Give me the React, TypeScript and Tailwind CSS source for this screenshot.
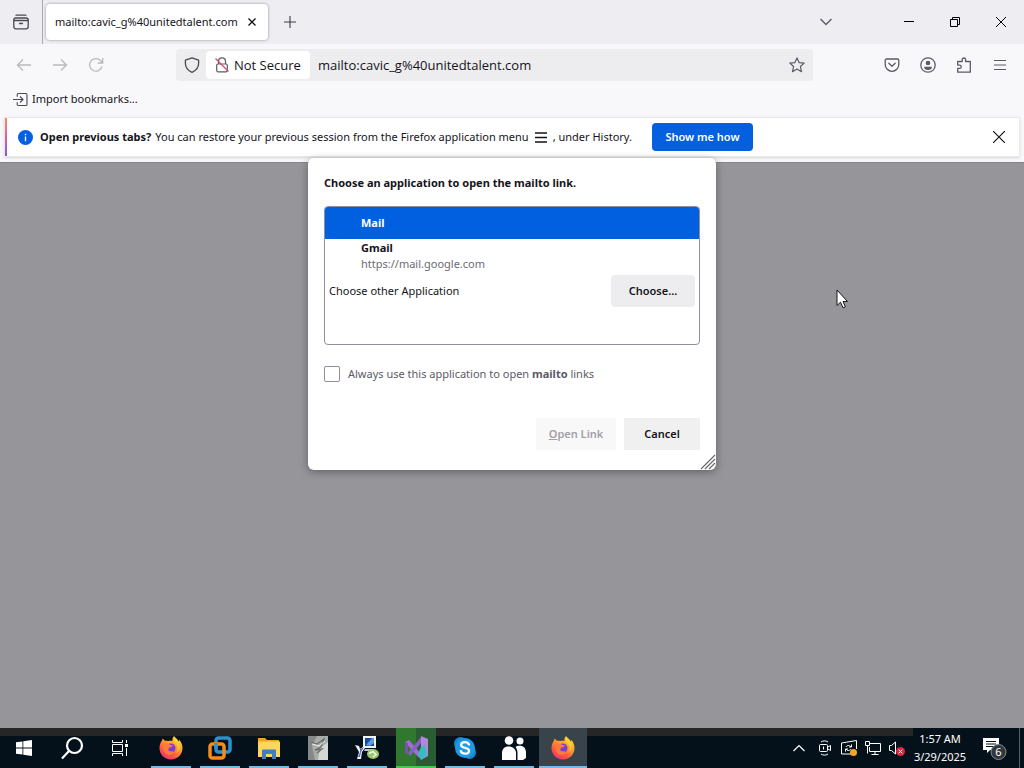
import React, { useState } from 'react';

const FirefoxLogo = () => (
  <svg className="w-6 h-6" viewBox="0 0 24 24">
    <defs>
      <linearGradient id="ffBody" x1="0.8" y1="0" x2="0.2" y2="1">
        <stop offset="0" stopColor="#ffe226" />
        <stop offset="0.4" stopColor="#ff9a2e" />
        <stop offset="0.75" stopColor="#ff4f45" />
        <stop offset="1" stopColor="#e6308a" />
      </linearGradient>
    </defs>
    <path d="M15 0c1 1.500 4 3 4.500 5.500.5-.4.600-1.200.500-1.800C22.500 6 23.500 9 23.500 12c0 6.500-5 11.500-11.500 11.500S.5 18.500.5 12c0-3 1-5.500 2.500-7.500l.6-2L6 4.800c1-.2 2-.1 3 .3C11 4.500 12.500 4.500 13.500 5 13 3 14 1 15 0z" fill="url(#ffBody)" />
    <circle cx="12" cy="12" r="4.500" fill="#7a3fd2" />
    <path d="M4 9c2-1.500 5-1.500 7-.5 1.200.7 2 1 3 1-.5 1.500-2 1.500-3.500 2-.8.3-.5 1.500-1.500 2 .8 1.800 3 2.500 5 1.500 1 1.500-1 4-3.500 4C6.500 19 3 14 4 9z" fill="#ff7a3c" />
    <path d="M15 6c4 2.500 5 7 2.500 11 3.500-2 4-7.500 2-11L15 1z" fill="#ffd53b" opacity="0.7" />
  </svg>
);

const WindowsLogo = () => (
  <svg className="w-4 h-4" viewBox="0 0 16 16" fill="#fff">
    <path d="M0 2.300L6.500 1.400V7.600H0zM7.300 1.300L16 0v7.600H7.300zM0 8.400h6.500v6.200L0 13.700zM7.300 8.400H16V16l-8.700-1.300z" />
  </svg>
);

const SearchIcon = () => (
  <svg className="w-6 h-6" viewBox="0 0 24 24" fill="none" stroke="#fff" strokeWidth="2.200">
    <circle cx="14.500" cy="9.500" r="7.500" />
    <path d="M9 15L2 22.500" />
  </svg>
);

const TaskViewIcon = () => (
  <svg className="w-4 h-4" viewBox="0 0 16 16" fill="none" stroke="#fff" strokeWidth="1">
    <path d="M.5 0v2.500h10V0M.5 16v-2.500h10V16M.5 4.500h10v7H.5zM14.500 0v3M14.500 8v8" />
    <path d="M13 4h3v3h-3z" fill="#fff" stroke="none" />
  </svg>
);

const VmwareIcon = () => (
  <svg className="w-6 h-6" viewBox="0 0 24 24" fill="none" strokeWidth="3.500">
    <rect x="8" y="2" width="14" height="14" rx="2.500" stroke="#2a93cf" />
    <rect x="2" y="8" width="14" height="14" rx="2.500" stroke="#f28c1c" />
    <path d="M8 12V7" stroke="#2a93cf" />
  </svg>
);

const ExplorerIcon = () => (
  <svg className="w-6 h-6" viewBox="0 0 24 24">
    <path d="M1 2h7l2 2h12v4H1z" fill="#e9a820" />
    <path d="M1 5.500h22V21H1z" fill="#fbd75e" />
    <path d="M5 23v-8.500a1 1 0 011-1h12a1 1 0 011 1V23h-4v-5H9v5z" fill="#3b80c3" />
  </svg>
);

const ServerIcon = () => (
  <svg className="w-6 h-6" viewBox="0 0 24 24">
    <path d="M2 0h20v24H2z" fill="#a9adaa" />
    <path d="M2 0h9L6 10l3 14H2z" fill="#858a87" />
    <path d="M14 12l8-6v18H12z" fill="#d5d8d5" />
    <path d="M5 6l6 2 7-5-3 8-6 3 7-1-5 4" fill="none" stroke="#6a706d" strokeWidth="1.300" />
    <path d="M6 8l7 2 6-5" fill="none" stroke="#eef0ee" />
  </svg>
);

const RemoteIcon = () => (
  <svg className="w-6 h-6" viewBox="0 0 24 24">
    <path d="M8 0h13v12H8z" fill="#f1f5f8" />
    <path d="M10 2h9v8h-9z" fill="#174a9c" />
    <path d="M11 9l6-7h2v5l-4 3z" fill="#5d9be0" />
    <path d="M10 13h9l1 2H9z" fill="#b9c5cf" />
    <path d="M0 9l4 1 1 3 4-3 1 2-3 4-1 7H2l2-7z" fill="#f0f3fa" />
    <path d="M5 13l4-2-3 5-1 5H3l2-5z" fill="#5a6fb5" />
    <ellipse cx="18" cy="18" rx="6" ry="5" fill="#9cc66c" />
    <path d="M14 17.500l4-2 3 3-3 2.500" fill="none" stroke="#eef7e2" strokeWidth="1.500" />
  </svg>
);

const VisualStudioIcon = () => (
  <svg className="w-6 h-6" viewBox="0 0 24 24">
    <path d="M1 6l4-2 13 15-1 4-4-3z" fill="#a76bd6" />
    <path d="M1 6l3 1v10l-3 1z" fill="#7b52ad" />
    <path d="M4 17l13-16 2 4L6 20z" fill="#8661c5" />
    <path d="M17 0l7 3v17l-7 4z" fill="#b487dc" />
    <path d="M17 11l4-2 2 10-6 5-3-6z" fill="#35bdc2" />
  </svg>
);

const SkypeIcon = () => (
  <svg className="w-6 h-6" viewBox="0 0 24 24">
    <circle cx="7.500" cy="7.500" r="6.500" fill="#1688d2" />
    <circle cx="16.500" cy="16.500" r="6.500" fill="#1688d2" />
    <circle cx="12" cy="12" r="10" fill="#1c9be2" />
    <path d="M16 8.500c-.6-1.500-2-2.300-4-2.300-2.300 0-3.900 1-3.900 2.800 0 4 7.900 1.800 7.900 5.700 0 2-1.700 3-4 3-2.200 0-3.600-.9-4.200-2.500" fill="none" stroke="#fff" strokeWidth="2.300" strokeLinecap="round" />
  </svg>
);

const PeopleIcon = () => (
  <svg className="w-6 h-6" viewBox="0 0 24 24" fill="#fff">
    <circle cx="7" cy="4.500" r="4.300" />
    <circle cx="18" cy="5" r="3.500" />
    <path d="M0 24v-7c0-4 2.500-6.500 6.500-6.500S14 13 14 17v7z" />
    <path d="M13.500 11c1-.8 2.500-1.200 4-1.200 4 0 6.500 2.700 6.500 6.700V22l-3 2h-5.500v-7c0-2.500-.7-4.500-2-6z" />
  </svg>
);

const pinnedApps = [
  { name: 'Firefox', icon: <FirefoxLogo />, bar: 'bg-[#75b8ea]', bg: '' },
  { name: 'VMware', icon: <VmwareIcon />, bar: 'bg-[#75b8ea]', bg: '' },
  { name: 'File Explorer', icon: <ExplorerIcon />, bar: 'bg-[#75b8ea]', bg: '' },
  { name: 'Server Tools', icon: <ServerIcon />, bar: 'bg-[#75b8ea]', bg: '' },
  { name: 'Remote Desktop', icon: <RemoteIcon />, bar: 'bg-[#75b8ea]', bg: '' },
  { name: 'Visual Studio', icon: <VisualStudioIcon />, bar: 'bg-[#45c94c]', bg: 'bg-linear-to-r from-[#31782f] from-50% to-[#2a5c33] to-50%' },
  { name: 'Skype', icon: <SkypeIcon />, bar: 'bg-[#75b8ea]', bg: '' },
  { name: 'People', icon: <PeopleIcon />, bar: 'bg-[#75b8ea]', bg: '' },
];

const TabStrip = () => (
  <div className="flex h-11 bg-[#eeedf2]">
    <button aria-label="Recent browsing" className="flex w-[43px] items-center justify-center border-r border-[#a9a9b2]">
      <svg className="w-4 h-4" viewBox="0 0 16 16" fill="none" stroke="#4a4a55" strokeWidth="1.300" strokeLinecap="round">
        <path d="M3 1.200h10" />
        <rect x=".8" y="4" width="14.400" height="10.800" rx="2" />
        <path d="M1 6.500h14M6.500 9.500h3" />
      </svg>
    </button>
    <div className="my-1 ml-[3px] flex w-[222px] items-center rounded bg-white pl-[9px] shadow-[0_0_3px_rgba(0,0,0,0.4)]">
      <span className="grow whitespace-nowrap text-[11px]">mailto:cavic_g%40unitedtalent.com</span>
      <button aria-label="Close tab" className="mr-3">
        <svg className="w-2 h-2" viewBox="0 0 8 8" stroke="#15141a" strokeWidth="1.400">
          <path d="M.5.5l7 7M7.500.5l-7 7" />
        </svg>
      </button>
    </div>
    <button aria-label="New tab" className="ml-4">
      <svg className="w-3 h-3" viewBox="0 0 12 12" stroke="#3d3c48" strokeWidth="1.100">
        <path d="M6 0v12M0 6h12" />
      </svg>
    </button>
    <div className="grow" />
    <button aria-label="List all tabs" className="mr-9 flex w-12 items-center justify-center">
      <svg className="w-3 h-2" viewBox="0 0 12 8" fill="none" stroke="#5b5b66" strokeWidth="1.400">
        <path d="M.5 1L6 6.500 11.500 1" />
      </svg>
    </button>
    <div className="flex">
      <button aria-label="Minimize" className="flex w-[46px] items-center justify-center">
        <svg className="w-[10px] h-[10px]" viewBox="0 0 10 10" stroke="#000"><path d="M0 4.500h10" /></svg>
      </button>
      <button aria-label="Restore" className="flex w-[46px] items-center justify-center">
        <svg className="w-[10px] h-[10px]" viewBox="0 0 10 10" fill="none" stroke="#000">
          <path d="M.5 2.500h7v7h-7zM2.500 2.500v-2h7v7h-2" />
        </svg>
      </button>
      <button aria-label="Close" className="flex w-[46px] items-center justify-center">
        <svg className="w-[10px] h-[10px]" viewBox="0 0 10 10" stroke="#000"><path d="M0 0l10 10M10 0L0 10" /></svg>
      </button>
    </div>
  </div>
);

const NavBar = () => {
  const [url, setUrl] = useState('mailto:cavic_g%40unitedtalent.com');

  return (
    <div className="flex h-[41px] items-center bg-[#f8f8fa] pl-4">
      <div className="flex w-[160px] gap-5">
        <button aria-label="Back" disabled>
          <svg className="w-4 h-4" viewBox="0 0 16 16" fill="none" stroke="#b9b9bf" strokeWidth="1.300"><path d="M15 8H1.500M7 2.500L1.500 8 7 13.500" /></svg>
        </button>
        <button aria-label="Forward" disabled>
          <svg className="w-4 h-4" viewBox="0 0 16 16" fill="none" stroke="#b9b9bf" strokeWidth="1.300"><path d="M1 8h13.500M9 2.500L14.500 8 9 13.500" /></svg>
        </button>
        <button aria-label="Reload" disabled>
          <svg className="w-4 h-4" viewBox="0 0 16 16" fill="none" stroke="#b9b9bf" strokeWidth="1.300"><path d="M14 9.500A6.300 6.300 0 1112.500 3.500L14.500 5.500M14.700 1v5H9.800" /></svg>
        </button>
      </div>
      <div className="flex h-8 grow items-center rounded bg-[#ededef] font-['Open_Sans','Noto_Sans',sans-serif] text-[13px]">
        <svg className="ml-2 w-4 h-4" viewBox="0 0 16 16" fill="none" stroke="#4a4a55" strokeWidth="1.300">
          <path d="M8 .8l6.600 2.400v3.300c0 4-2.600 7-6.600 8.800C4 13.500 1.400 10.500 1.400 6.500V3.200z" strokeLinejoin="round" />
        </svg>
        <button className="ml-[6px] flex h-7 w-[104px] items-center gap-1 whitespace-nowrap rounded bg-white pl-2">
          <svg className="w-4 h-4 shrink-0" viewBox="0 0 16 16" fill="none" strokeWidth="1.200">
            <path d="M4.500 7V4.300a3.500 3.500 0 017 0V7" stroke="#5b5b66" />
            <rect x="2.700" y="7" width="10.600" height="7.800" rx="1.200" stroke="#5b5b66" />
            <path d="M1.500 1.500l13 13" stroke="#d0506c" />
          </svg>
          <span className="pt-0.5">Not Secure</span>
        </button>
        <input
          aria-label="Address"
          value={url}
          onChange={e => setUrl(e.target.value)}
          className="ml-2 min-w-0 grow bg-transparent pt-0.5 outline-none"
        />
        <button aria-label="Bookmark this page" className="mr-2">
          <svg className="w-4 h-4" viewBox="0 0 16 16" fill="none" stroke="#5b5b66" strokeWidth="1.200" strokeLinejoin="round">
            <path d="M8 .9l2.100 4.700 5.100.5-3.800 3.400 1.100 5.200L8 12.100l-4.500 2.600 1.100-5.200L.8 6.100l5.100-.5z" />
          </svg>
        </button>
      </div>
      <div className="ml-[71px] mr-4 flex gap-5 text-[#5b5b66]">
        <button aria-label="Save to Pocket">
          <svg className="w-4 h-4" viewBox="0 0 16 16" fill="none" stroke="currentColor" strokeWidth="1.300" strokeLinecap="round" strokeLinejoin="round">
            <path d="M2.500 2h11c.7 0 1.300.6 1.300 1.300V7.500A6.800 6.800 0 011.200 7.500V3.300C1.200 2.600 1.800 2 2.500 2z" />
            <path d="M4.800 6.200L8 9.200l3.200-3" />
          </svg>
        </button>
        <button aria-label="Account">
          <svg className="w-4 h-4" viewBox="0 0 16 16" fill="currentColor">
            <circle cx="8" cy="8" r="7.200" fill="none" stroke="currentColor" strokeWidth="1.300" />
            <circle cx="8" cy="6" r="2.300" />
            <path d="M4 9.700h8c0 2-1.700 3.300-4 3.300s-4-1.300-4-3.300z" />
          </svg>
        </button>
        <button aria-label="Extensions">
          <svg className="w-4 h-4" viewBox="0 0 16 16" fill="none" stroke="currentColor" strokeWidth="1.300" strokeLinejoin="round">
            <path d="M6.200 4.500V2.700a1.700 1.700 0 013.400 0v1.800h4.700v10.700H1.700v-3.800h1.900a1.600 1.600 0 000-3.300H1.700V4.500z" />
          </svg>
        </button>
        <button aria-label="Application menu">
          <svg className="w-4 h-4" viewBox="0 0 16 16" stroke="currentColor" strokeWidth="1.200"><path d="M2 3.500h12M2 8h12M2 12.500h12" /></svg>
        </button>
      </div>
    </div>
  );
};

const NotificationBar = () => (
  <div className="bg-[#f8f8fa] px-1 pb-[5px] pt-1">
    <div className="flex h-10 items-center border border-[#e9e9ec] bg-white text-[11px] shadow-sm">
      <div className="h-full w-[2px] bg-linear-to-b from-[#f58a5b] via-[#d560a0] to-[#8a55d0]" />
      <svg className="ml-[11px] w-[15px] h-[15px] shrink-0" viewBox="0 0 16 16">
        <circle cx="8" cy="8" r="8" fill="#0560df" />
        <path d="M8 7v5M8 4v1.500" stroke="#fff" strokeWidth="1.400" />
      </svg>
      <p className="ml-[7px] flex items-center whitespace-nowrap">
        <strong className="mr-1 font-bold">Open previous tabs?</strong>
        You can restore your previous session from the Firefox application menu
        <svg className="mx-1 w-4 h-4" viewBox="0 0 16 16" stroke="#15141a" strokeWidth="1.300"><path d="M2 4h12M2 8.500h12M2 13h12" /></svg>
        , under History.
      </p>
      <button className="ml-5 h-7 w-[101px] rounded bg-[#0560df] font-semibold text-white">Show me how</button>
      <div className="grow" />
      <button aria-label="Dismiss" className="mr-[14px]">
        <svg className="w-3 h-3" viewBox="0 0 12 12" stroke="#15141a" strokeWidth="1.200"><path d="M0 0l12 12M12 0L0 12" /></svg>
      </button>
    </div>
  </div>
);

const AppChooserDialog = () => {
  const [selected, setSelected] = useState('mail');
  const [always, setAlways] = useState(false);

  return (
    <div role="dialog" aria-labelledby="chooser-title" className="absolute left-1/2 top-[158px] w-[408px] -translate-x-1/2 rounded-md bg-white px-4 pb-5 pt-[17px] text-[11px] shadow-[0_2px_8px_rgba(0,0,0,0.35)]">
      <h1 id="chooser-title" className="font-bold leading-4">Choose an application to open the mailto link.</h1>
      <div className="mt-[15px] h-[139px] overflow-hidden rounded border border-[#8f8f9d]">
        <button
          onClick={() => setSelected('mail')}
          className={`block h-8 w-full pl-9 pt-px text-left font-bold ${selected === 'mail' ? 'bg-[#0060df] text-white' : ''}`}
        >
          Mail
        </button>
        <button
          onClick={() => setSelected('gmail')}
          className={`block w-full pl-9 pt-px text-left leading-4 ${selected === 'gmail' ? 'bg-[#0060df] text-white' : ''}`}
        >
          <span className="block font-bold">Gmail</span>
          <span className={`block ${selected === 'gmail' ? '' : 'text-[#6c6b74]'}`}>https://mail.google.com</span>
        </button>
        <div className="mt-[3px] flex items-center justify-between px-1">
          <span>Choose other Application</span>
          <button className="h-8 w-[84px] rounded bg-[#ededef] font-semibold">Choose...</button>
        </div>
      </div>
      <label className="mt-[19px] flex items-center gap-2 leading-5 text-[#5b5b66]">
        <input
          type="checkbox"
          checked={always}
          onChange={e => setAlways(e.target.checked)}
          className="h-4 w-4 appearance-none rounded-xs border border-[#8f8f9d] bg-white checked:bg-[#0060df]"
        />
        <span>Always use this application to open <b>mailto</b> links</span>
      </label>
      <div className="mt-[34px] flex justify-end gap-2 font-semibold">
        <button disabled className="h-8 w-20 bg-[#f8f8f9] text-[#a1a1a6]"><u>O</u>pen Link</button>
        <button className="h-8 w-[76px] bg-[#f0f0f1]">Cancel</button>
      </div>
      <svg className="absolute bottom-0 right-0 w-4 h-4" viewBox="0 0 16 16" stroke="#66666b" strokeWidth="1.100">
        <path d="M1 15L15 1M5 15L15 5M9 15l6-6" />
      </svg>
    </div>
  );
};

const Taskbar = () => (
  <div className="flex h-10 bg-[#04111b] text-white">
    <div className="flex grow bg-linear-to-b from-[#262626] from-20% to-[#04111b] to-20%">
      <button aria-label="Start" className="flex w-12 items-center justify-center"><WindowsLogo /></button>
      <button aria-label="Search" className="flex w-12 items-center justify-center"><SearchIcon /></button>
      <button aria-label="Task View" className="flex w-12 items-center justify-center"><TaskViewIcon /></button>
      <div className="ml-[2px] flex">
        {pinnedApps.map(app => (
          <button key={app.name} aria-label={app.name} className="flex w-[49px] justify-center">
            <span className={`flex h-full w-10 flex-col items-center justify-between pt-2 ${app.bg}`}>
              {app.icon}
              <span className={`h-[2px] w-full ${app.bar}`} />
            </span>
          </button>
        ))}
        <button aria-label="Firefox window" className="ml-px flex w-12 flex-col items-center justify-between bg-[#38434b] pt-2">
          <FirefoxLogo />
          <span className="h-[2px] w-full bg-[#75b8ea]" />
        </button>
      </div>
      <div className="grow" />
      <div className="mr-2 flex items-center gap-2">
        <button aria-label="Show hidden icons" className="mr-1">
          <svg className="w-3 h-4" viewBox="0 0 12 16" fill="none" stroke="#fff" strokeWidth="1.200"><path d="M.5 11L6 5.500l5.500 5.500" /></svg>
        </button>
        <svg className="w-4 h-4" viewBox="0 0 16 16" fill="none" stroke="#fff">
          <rect x="2.500" y="4.500" width="8" height="7" rx="1" />
          <path d="M11 7l2.500-1.500v5L11 9M4 2c2-1.500 5-1.500 7 0M4 14c2 1.500 5 1.500 7 0M6.500 6.500v3" />
        </svg>
        <svg className="w-4 h-4" viewBox="0 0 16 16" fill="none" stroke="#fff">
          <path d="M10 14H.5V3L15.500.5V9M5 7c1-2 4-2 5 0M10.500 4.500V7H8M10 9c-1 2-4 2-5 0M4.500 11.500V9H7" />
          <circle cx="12.500" cy="12.500" r="3.500" fill="#f5a623" stroke="none" />
        </svg>
        <svg className="w-4 h-4" viewBox="0 0 16 16" fill="none" stroke="#fff">
          <path d="M5 3.500h10.500v8H4.500V7M10 12v2.500M6.500 14.500h7M.5 1.500h4v4h-4zM2.500 5.500v8" />
        </svg>
        <svg className="w-4 h-4" viewBox="0 0 16 16" fill="none" stroke="#fff">
          <path d="M.5 5.500h2L6.500 2v12l-4-3.500h-2z" />
          <circle cx="11.500" cy="11.500" r="4.500" fill="#d92843" stroke="none" />
          <path d="M9.700 9.700l3.600 3.600M13.300 9.700l-3.600 3.600" />
        </svg>
      </div>
    </div>
    <div className="flex w-[54px] flex-col items-center justify-center whitespace-nowrap text-[11px] leading-[18px]">
      <span>1:57 AM</span>
      <span>3/29/2025</span>
    </div>
    <button aria-label="Notifications" className="ml-4 mr-3 self-center">
      <svg className="w-6 h-6" viewBox="0 0 24 24">
        <path d="M0 2h16v12H7l-3 3v-3H0z" fill="#fff" />
        <path d="M3 5.500h10M3 8h10M3 10.500h7" stroke="#04111b" />
        <circle cx="15.500" cy="16" r="7.500" fill="#33383c" stroke="#85898d" />
        <text x="15.500" y="20" textAnchor="middle" fontSize="11" fill="#fff">6</text>
      </svg>
    </button>
    <div className="w-[5px] border-l border-[#56606a]" />
  </div>
);

const App: React.FC = () => (
  <div className="relative flex min-h-screen flex-col overflow-hidden bg-[#96959a] font-['Noto_Sans','Open_Sans',sans-serif] text-[#15141a]">
    <TabStrip />
    <NavBar />
    <div className="flex h-7 items-center bg-[#f8f8fa] pl-[13px] text-[11px]">
      <button className="flex items-center gap-1">
        <svg className="w-[15px] h-[15px]" viewBox="0 0 16 16" fill="none" stroke="#4a4a55" strokeWidth="1.200">
          <path d="M4.500 5V2.800c0-.7.500-1.200 1.200-1.200h8c.7 0 1.200.5 1.200 1.200v10.400c0 .7-.5 1.200-1.200 1.200h-8c-.7 0-1.200-.5-1.200-1.200V11M0 8h10.500M7.500 4.800L10.700 8l-3.200 3.200" />
        </svg>
        Import bookmarks...
      </button>
    </div>
    <NotificationBar />
    <main className="grow border-t border-[#85848a]" />
    <Taskbar />
    <AppChooserDialog />
    <svg className="absolute left-[836px] top-[289px] w-3 h-5" viewBox="0 0 12 20">
      <path d="M1 1v15.500l3.500-3.300L7 18.800l2.300-1L7 12.500h4.500z" fill="#fff" stroke="#15141a" />
    </svg>
  </div>
);

export default App;
